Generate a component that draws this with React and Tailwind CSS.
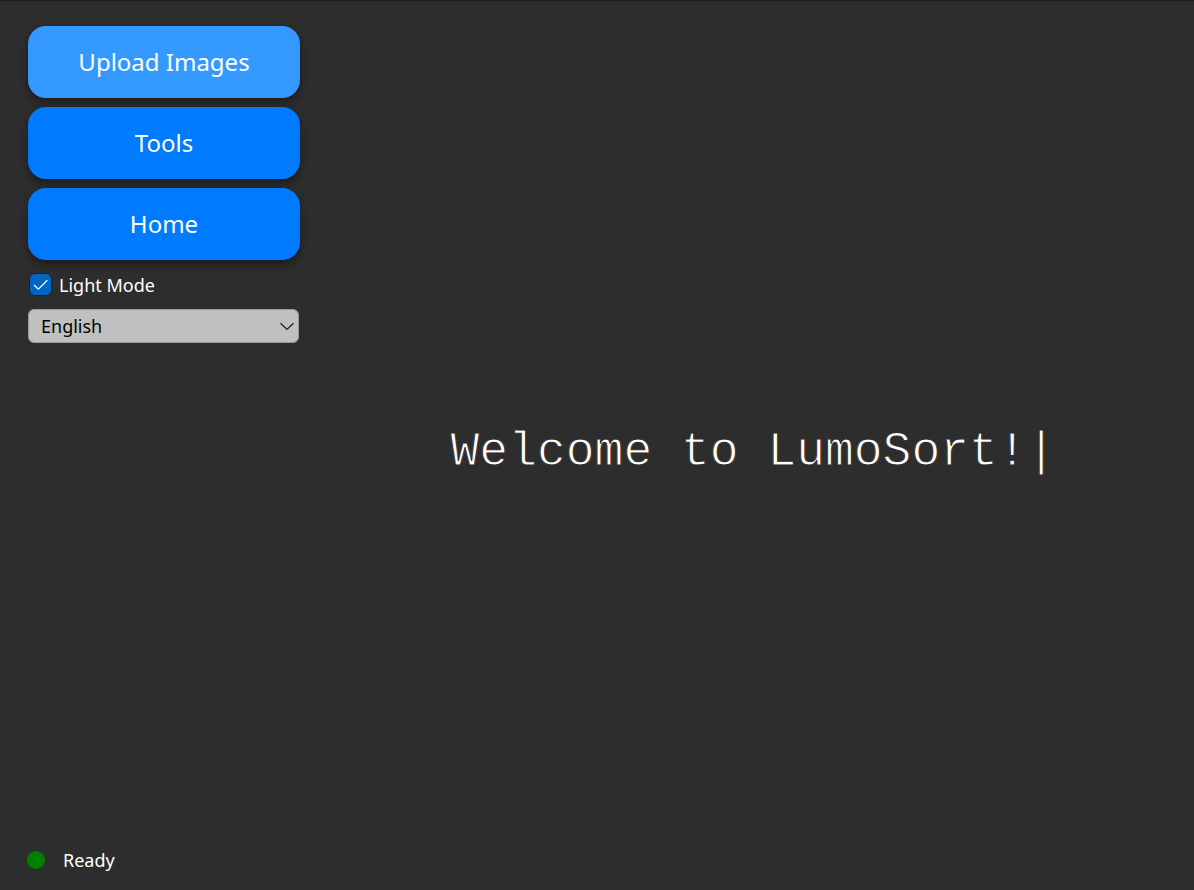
import { useState } from "react";

function MenuButton({ children, active }) {
  return (
    <button
      type="button"
      className={
        "h-[72px] w-full rounded-[18px] text-2xl text-white shadow-[0_4px_8px_rgba(0,0,0,0.4)] " +
        (active ? "bg-[#3399ff]" : "bg-[#007bff]")
      }
    >
      {children}
    </button>
  );
}

export default function App() {
  const [checked, setChecked] = useState(true);
  return (
    <div className="flex min-h-screen gap-3 border-t border-[#1c1c1c] bg-[#2d2d2d] pl-7 font-['Noto_Sans',sans-serif] text-white">
      <aside className="flex w-[272px] flex-col justify-between">
        <nav className="flex flex-col gap-[9px] pt-[25px]">
          <MenuButton active>Upload Images</MenuButton>
          <MenuButton>Tools</MenuButton>
          <MenuButton>Home</MenuButton>
          <label className="flex h-[31px] items-center gap-[7px] pl-px text-lg">
            <span className="grid">
              <input
                type="checkbox"
                checked={checked}
                onChange={(e) => setChecked(e.target.checked)}
                className="peer col-start-1 row-start-1 m-0 size-[23px] appearance-none rounded-md border border-[#0d2338] bg-[#0067c0]"
              />
              <svg viewBox="0 0 23 23" className="pointer-events-none invisible col-start-1 row-start-1 size-[23px] peer-checked:visible" fill="none" stroke="white" strokeWidth="1.2">
                <path d="M5 12 9.3 16.2 18.3 7.3" />
              </svg>
            </span>
            Light Mode
          </label>
          <div className="mr-px grid">
            <select aria-label="Language" className="col-start-1 row-start-1 h-[34px] w-full appearance-none rounded-md border border-[#999] bg-[#c0c0c0] pl-3 text-lg leading-6 text-black">
              <option>English</option>
            </select>
            <svg viewBox="0 0 14 8" className="pointer-events-none col-start-1 row-start-1 mr-[5px] h-2 w-3.5 self-center justify-self-end" fill="none" stroke="#1a1a1a" strokeWidth="1.2">
              <path d="M.5 1.3 7 7.4 13.5 1.3" />
            </svg>
          </div>
        </nav>
        <footer role="status" className="-ml-px flex h-[60px] items-center gap-[18px] text-lg">
          <span className="size-[18px] rounded-full bg-[#008000]" />
          Ready
        </footer>
      </aside>
      <main className="flex flex-1 items-center justify-center pt-3">
        <h1 className="font-['Liberation_Mono',monospace] text-5xl [-webkit-text-stroke:1px_#2d2d2d]">Welcome to LumoSort!|</h1>
      </main>
    </div>
  );
}
